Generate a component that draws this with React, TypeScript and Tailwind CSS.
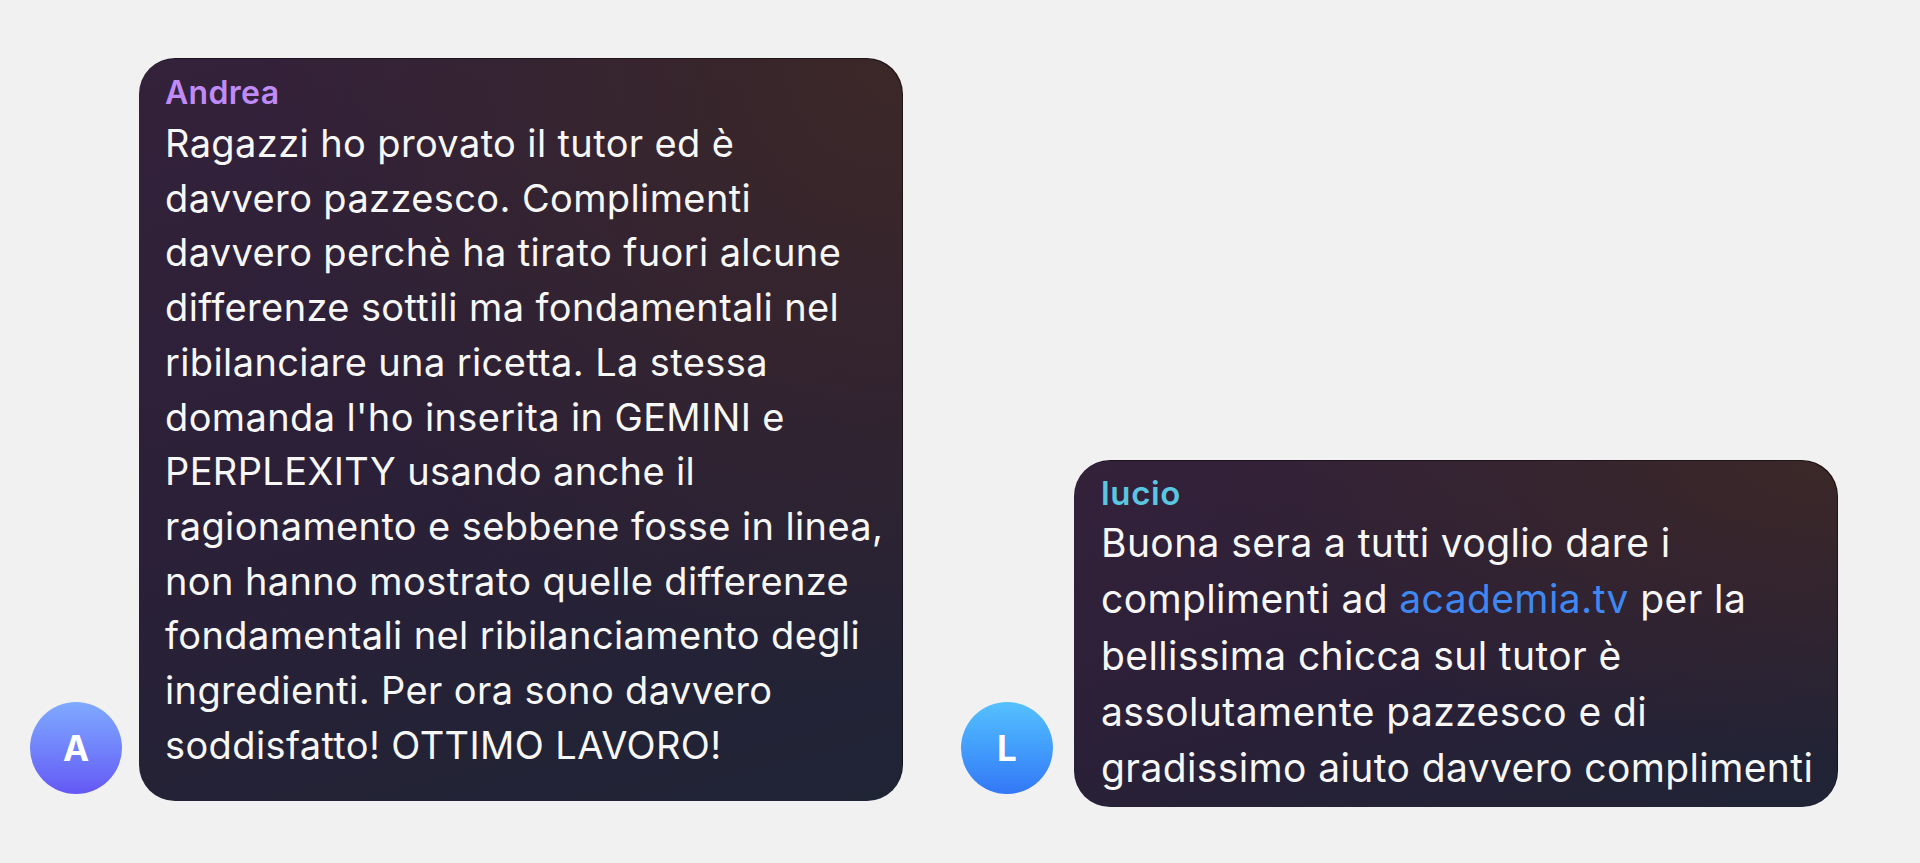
import React from "react";

const andreaLines = [
  "Ragazzi ho provato il tutor ed è",
  "davvero pazzesco. Complimenti",
  "davvero perchè ha tirato fuori alcune",
  "differenze sottili ma fondamentali nel",
  "ribilanciare una ricetta. La stessa",
  "domanda l'ho inserita in GEMINI e",
  "PERPLEXITY usando anche il",
  "ragionamento e sebbene fosse in linea,",
  "non hanno mostrato quelle differenze",
  "fondamentali nel ribilanciamento degli",
  "ingredienti. Per ora sono davvero",
  "soddisfatto! OTTIMO LAVORO!",
];

const bubbleBg =
  "bg-[image:radial-gradient(ellipse_at_top_right,rgba(60,40,38,0.95)_0%,rgba(60,40,38,0)_60%),linear-gradient(165deg,#34213a_0%,#2a2037_55%,#1f2435_100%)]";

export default function App() {
  return (
    <div className="w-[1920px] h-[863px] bg-[#f1f1f1] overflow-hidden font-['Inter','Liberation_Sans',sans-serif]">
      <div className="flex items-end pl-[30px] pt-[58px]">
        {/* Group 1 */}
        <div className="flex items-end gap-[17px] mb-[6px]">
          <div className="w-[92px] h-[92px] rounded-full bg-gradient-to-b from-[#80aaff] to-[#6557f5] flex items-center justify-center mb-[7px] shrink-0">
            <span className="text-white text-[35px] font-bold leading-none">A</span>
          </div>
          <div
            className={`w-[764px] h-[743px] rounded-[36px] ${bubbleBg} shadow-[inset_-1px_1px_0_rgba(0,0,0,0.45)] pt-[15px] px-[26px] overflow-hidden`}
          >
            <div className="text-[32px] leading-[40px] font-semibold text-[#c08af7] tracking-[0.01em]">
              Andrea
            </div>
            <div className="mt-[3px] text-[38px] leading-[54.7px] text-[#f7f7f7] tracking-[0.01em]">
              {andreaLines.map((l, i) => (
                <div key={i} className="whitespace-nowrap">
                  {l}
                </div>
              ))}
            </div>
          </div>
        </div>

        {/* Group 2 */}
        <div className="flex items-end gap-[21px] ml-[58px]">
          <div className="w-[92px] h-[92px] rounded-full bg-gradient-to-b from-[#56c1ff] to-[#3477f6] flex items-center justify-center mb-[13px] shrink-0">
            <span className="text-white text-[35px] font-bold leading-none">L</span>
          </div>
          <div
            className={`w-[764px] h-[347px] rounded-[36px] ${bubbleBg} shadow-[inset_-1px_1px_0_rgba(0,0,0,0.45)] pt-[13px] px-[27px] overflow-hidden`}
          >
            <div className="text-[33px] leading-[40px] font-semibold text-[#5bc6e0] tracking-[0.02em]">
              lucio
            </div>
            <div className="mt-[2px] text-[39px] leading-[56.25px] text-[#f7f7f7] tracking-[0.01em]">
              <div className="whitespace-nowrap">Buona sera a tutti voglio dare i</div>
              <div className="whitespace-nowrap">
                complimenti ad <span className="text-[#3f88f2]">academia.tv</span> per la
              </div>
              <div className="whitespace-nowrap">bellissima chicca sul tutor è</div>
              <div className="whitespace-nowrap">assolutamente pazzesco e di</div>
              <div className="whitespace-nowrap">gradissimo aiuto davvero complimenti</div>
            </div>
          </div>
        </div>
      </div>
    </div>
  );
}
